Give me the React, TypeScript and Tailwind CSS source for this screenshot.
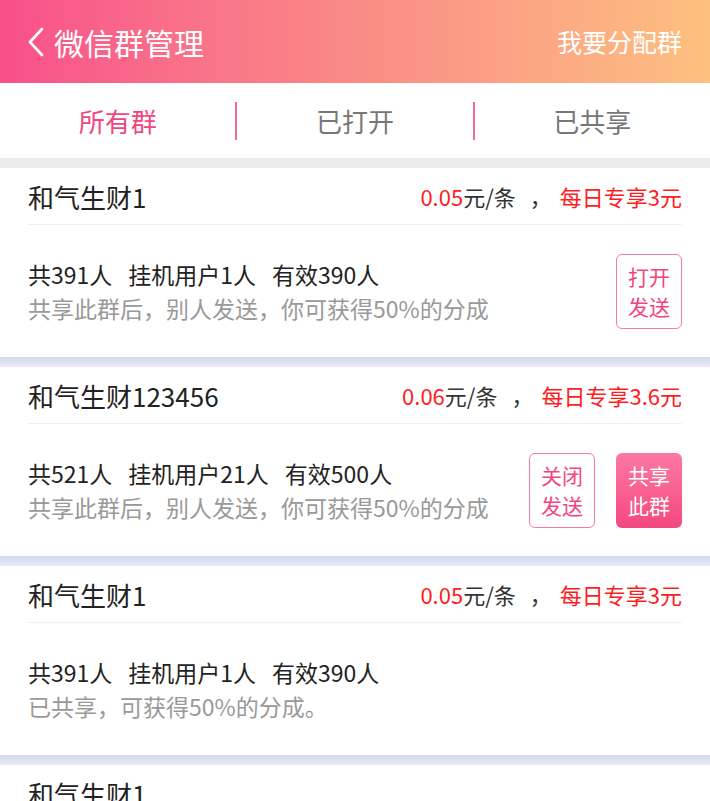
import React from 'react'

const font = { fontFamily: '"Noto Sans CJK SC", "Noto Sans", sans-serif' }

type Group = {
  name: string
  price?: string
  daily?: string
  total: string
  hang: string
  valid: string
  note: string
  buttons: 'open' | 'close-share' | 'none'
}

const groups: Group[] = [
  { name: '和气生财1', price: '0.05', daily: '每日专享3元', total: '391', hang: '1', valid: '390', note: '共享此群后，别人发送，你可获得50%的分成', buttons: 'open' },
  { name: '和气生财123456', price: '0.06', daily: '每日专享3.6元', total: '521', hang: '21', valid: '500', note: '共享此群后，别人发送，你可获得50%的分成', buttons: 'close-share' },
  { name: '和气生财1', price: '0.05', daily: '每日专享3元', total: '391', hang: '1', valid: '390', note: '已共享，可获得50%的分成。', buttons: 'none' },
  { name: '和气生财1', total: '391', hang: '1', valid: '390', note: '已共享，可获得50%的分成。', buttons: 'none' },
]

const OutlineBtn = ({ top, bottom }: { top: string; bottom: string }) => (
  <div className="w-[66px] h-[75px] flex flex-col items-center justify-center rounded-[6px] border border-[#f77aa2] bg-white text-[#f2457f] text-[21px] leading-[30px]">
    <span>{top}</span>
    <span>{bottom}</span>
  </div>
)

const Card = ({ g }: { g: Group }) => (
  <div className="bg-white h-[189px] flex flex-col">
    <div className="mx-[28px] h-[57px] flex items-center justify-between border-b border-[#f1f1f1]">
      <span className="text-[26px] text-[#222]">{g.name}</span>
      {g.price && (
        <span className="text-[22px] text-[#333] flex items-center">
          <span className="text-[#ff1c1c]">{g.price}</span>
          <span>元/条</span>
          <span className="ml-[14px] mr-[8px]">，</span>
          <span className="text-[#ff1c1c]">{g.daily}</span>
        </span>
      )}
    </div>
    <div className="flex-1 mx-[28px] flex items-center justify-between">
      <div className="flex flex-col">
        <div className="flex gap-[16px] text-[23px] leading-[34px] text-[#222]">
          <span>共{g.total}人</span>
          <span>挂机用户{g.hang}人</span>
          <span>有效{g.valid}人</span>
        </div>
        <div className="text-[23px] leading-[34px] text-[#999]">{g.note}</div>
      </div>
      {g.buttons === 'open' && <OutlineBtn top="打开" bottom="发送" />}
      {g.buttons === 'close-share' && (
        <div className="flex gap-[21px]">
          <OutlineBtn top="关闭" bottom="发送" />
          <div className="w-[66px] h-[75px] flex flex-col items-center justify-center rounded-[6px] bg-gradient-to-b from-[#fc78a3] to-[#f4467f] text-white text-[21px] leading-[30px]">
            <span>共享</span>
            <span>此群</span>
          </div>
        </div>
      )}
    </div>
  </div>
)

export default function App() {
  return (
    <div className="w-[710px] h-[801px] overflow-hidden bg-white" style={font}>
      <div className="h-[83px] flex items-center justify-between pl-[26px] pr-[28px] bg-gradient-to-r from-[#f84f8a] via-[#f98a86] to-[#fdc07f] text-white">
        <div className="flex items-center gap-[8px]">
          <svg width="20" height="30" viewBox="0 0 20 30" fill="none">
            <polyline points="16,2 4,15 16,28" stroke="white" strokeWidth="2.6" strokeLinecap="round" strokeLinejoin="round" />
          </svg>
          <span className="text-[30px] leading-none">微信群管理</span>
        </div>
        <span className="text-[25px]">我要分配群</span>
      </div>

      <div className="h-[75px] flex items-center bg-white">
        <div className="flex-1 text-center text-[26px] text-[#f2457f]">所有群</div>
        <div className="w-[2px] h-[38px] bg-[#f36a98]" />
        <div className="flex-1 text-center text-[26px] text-[#777]">已打开</div>
        <div className="w-[2px] h-[38px] bg-[#f36a98]" />
        <div className="flex-1 text-center text-[26px] text-[#777]">已共享</div>
      </div>

      <div className="h-[10px] bg-[#ebebeb]" />

      {groups.map((g, i) => (
        <div key={i}>
          <Card g={g} />
          <div className="h-[10px] bg-gradient-to-b from-[#d2d9ef] to-[#e9ebf3]" />
        </div>
      ))}
    </div>
  )
}
